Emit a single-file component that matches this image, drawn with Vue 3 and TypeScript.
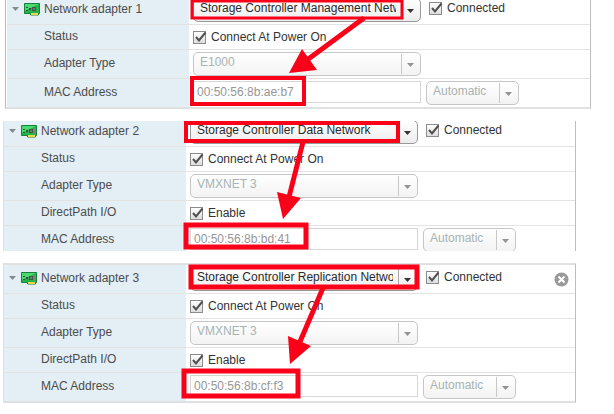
<script setup lang="ts">
import { ref } from 'vue'

interface Adapter {
  id: number
  network: string
  type: string
  directPath: boolean
  mac: string
  removable: boolean
}

const adapters = ref<Adapter[]>([
  { id: 1, network: 'Storage Controller Management Network', type: 'E1000', directPath: false, mac: '00:50:56:8b:ae:b7', removable: false },
  { id: 2, network: 'Storage Controller Data Network', type: 'VMXNET 3', directPath: true, mac: '00:50:56:8b:bd:41', removable: false },
  { id: 3, network: 'Storage Controller Replication Network', type: 'VMXNET 3', directPath: true, mac: '00:50:56:8b:cf:f3', removable: true },
])

const callouts = [
  { x: 192, y: 1, w: 210, h: 17, s: 3 },
  { x: 192, y: 78, w: 112, h: 26, s: 4 },
  { x: 186, y: 123, w: 212, h: 18, s: 4 },
  { x: 186, y: 225, w: 120, h: 22, s: 5 },
  { x: 191, y: 267, w: 226, h: 20, s: 5 },
  { x: 184, y: 371, w: 114, h: 25, s: 5 },
]

const arrows = [
  { line: 'M364 18 L307 60', head: '289,73 302,49 317,70' },
  { line: 'M303 142 L289 197', head: '283,219 277,192 301,198' },
  { line: 'M323 288 L299 344', head: '290,364 288,336 311,346' },
]
</script>

<template>
  <main class="page">
    <section v-for="a in adapters" :key="a.id" class="window" :class="'window-' + a.id">
      <div class="panel">
        <div class="row tall">
          <div class="name">
            <button class="toggle" type="button" :aria-label="'Collapse adapter ' + a.id">
              <svg width="7" height="4" viewBox="0 0 7 4"><path d="M0 0H7L3.5 4Z" fill="#848b8f" /></svg>
            </button>
            <svg class="card" width="16" height="13" viewBox="0 0 16 13" aria-hidden="true">
              <path d="M0.5 0.5H15.5V10.5H14.5V12H6.5V10.5H0.5Z" fill="#25b34b" stroke="#168238" />
              <path d="M1 1H15L1 8Z" fill="#4bd873" />
              <path d="M7 10H14V12H7Z" fill="#e5d84b" />
              <path d="M2 4H4V5H2ZM2 7H4V8H2ZM5 5H7V7H5Z" fill="#285438" />
              <path d="M8 4H12V8H8Z" fill="#45534b" />
              <path d="M9 5H11V7H9Z" fill="#6a7d71" />
              <path d="M13 3H14V9H13Z" fill="#6b8d70" />
            </svg>
            <label :for="'net' + a.id">Network adapter {{ a.id }}</label>
          </div>
          <div class="value">
            <span class="combo wide">
              <select :id="'net' + a.id"><option>{{ a.network }}</option></select>
              <svg class="drop" width="20" height="22" viewBox="0 0 20 22"><path d="M0.5 1V21" stroke="#a8a8a8" /><path d="M6 10H13L9.5 14Z" fill="#333" /></svg>
            </span>
            <label class="check connected">
              <span class="box"><input type="checkbox" checked /><svg width="15" height="13" viewBox="0 0 15 13"><path d="M3 6L6 9.5L12.5 1.5" /></svg></span>
              Connected
            </label>
            <button v-if="a.removable" class="remove" type="button" aria-label="Remove">
              <svg width="15" height="15" viewBox="0 0 15 15"><circle cx="7.5" cy="7.5" r="7" fill="#999" /><path d="M4.5 4.5L10.5 10.5M10.5 4.5L4.5 10.5" stroke="#fff" stroke-width="2" /></svg>
            </button>
          </div>
        </div>

        <div class="row">
          <label class="name" :for="'power' + a.id">Status</label>
          <div class="value">
            <label class="check">
              <span class="box"><input :id="'power' + a.id" type="checkbox" checked /><svg width="15" height="13" viewBox="0 0 15 13"><path d="M3 6L6 9.5L12.5 1.5" /></svg></span>
              Connect At Power On
            </label>
          </div>
        </div>

        <div class="row tall">
          <label class="name" :for="'type' + a.id">Adapter Type</label>
          <div class="value">
            <span class="combo wide">
              <select :id="'type' + a.id" disabled><option>{{ a.type }}</option></select>
              <svg class="drop" width="20" height="22" viewBox="0 0 20 22"><path d="M0.5 1V21" stroke="#c8c8c8" /><path d="M6 10H13L9.5 14Z" fill="#929292" /></svg>
            </span>
          </div>
        </div>

        <div v-if="a.directPath" class="row">
          <label class="name" :for="'direct' + a.id">DirectPath I/O</label>
          <div class="value">
            <label class="check">
              <span class="box"><input :id="'direct' + a.id" type="checkbox" checked /><svg width="15" height="13" viewBox="0 0 15 13"><path d="M3 6L6 9.5L12.5 1.5" /></svg></span>
              Enable
            </label>
          </div>
        </div>

        <div class="row tall">
          <label class="name" :for="'mac' + a.id">MAC Address</label>
          <div class="value">
            <input :id="'mac' + a.id" class="mac" type="text" :value="a.mac" disabled />
            <span class="combo short">
              <select aria-label="MAC assignment" disabled><option>Automatic</option></select>
              <svg class="drop" width="20" height="22" viewBox="0 0 20 22"><path d="M0.5 1V21" stroke="#c8c8c8" /><path d="M6 10H13L9.5 14Z" fill="#929292" /></svg>
            </span>
          </div>
        </div>
      </div>
    </section>

    <svg class="annotations" width="614" height="414" viewBox="0 0 614 414" aria-hidden="true">
      <rect v-for="(c, i) in callouts" :key="'c' + i" :x="c.x" :y="c.y" :width="c.w" :height="c.h" :stroke-width="c.s" fill="none" />
      <template v-for="(r, i) in arrows" :key="'a' + i">
        <path :d="r.line" stroke-width="5" />
        <polygon :points="r.head" stroke="none" />
      </template>
    </svg>
  </main>
</template>

<style>
body {
  margin: 0;
  background: #fff;
}
</style>

<style scoped>
.page {
  position: relative;
  display: flex;
  flex-direction: column;
  gap: 12px;
  font-family: "Liberation Sans", Arial, sans-serif;
  font-size: 12px;
  line-height: 14px;
  color: #333;
}
.window {
  overflow: hidden;
  margin: 0 38px 0 3px;
}
.window-1 {
  margin: 0 23px 0 5px;
}
.window-2 {
  height: 130px;
}
.panel {
  border: solid #e0e0e0;
  border-width: 2px 1px 2px 1px;
  border-right-color: #bdbdbd;
}
.window-1 .panel {
  margin-top: -4px;
  padding-left: 1px;
  border-top: 0;
  border-left-color: #b8b8b8;
}
.window-2 .panel {
  margin-top: -3px;
  border-top: 0;
}
.row {
  display: grid;
  grid-template-columns: 182px minmax(0, 1fr);
  height: 24px;
  border-bottom: 1px solid #e3e3e3;
}
.row.tall {
  height: 28px;
}
.row:last-child {
  border-bottom: 0;
}
.name {
  display: flex;
  align-items: center;
  padding: 0 0 3px 37px;
  background: #e3eef5;
  color: #4c4c4c;
}
div.name {
  padding-left: 5px;
}
.toggle,
.remove {
  display: flex;
  padding: 0;
  border: 0;
  background: none;
}
.card {
  margin: 2px 4px 0 5px;
}
.value {
  display: flex;
  align-items: center;
  padding-left: 4px;
  white-space: nowrap;
}
.combo {
  position: relative;
  flex: none;
  height: 24px;
}
.wide {
  width: 228px;
}
.short {
  width: 93px;
  margin-left: 5px;
}
select {
  appearance: none;
  box-sizing: border-box;
  width: 100%;
  height: 24px;
  margin: 0;
  padding: 0 24px 4px 6px;
  border: 1px solid #999;
  border-radius: 5px;
  background: linear-gradient(#fff, #ececec);
  color: #2b2b2b;
  font: inherit;
  display: block;
}
select:disabled {
  border-color: #c6c6c6;
  background: linear-gradient(#fff, #f3f3f3);
  color: #a8b3b2;
  opacity: 1;
}
.drop {
  position: absolute;
  top: 1px;
  right: 0;
  pointer-events: none;
}
.check {
  display: flex;
  align-items: center;
  gap: 5px;
}
.connected {
  margin: 0 0 4px 8px;
}
.box {
  display: grid;
  width: 13px;
  height: 13px;
}
.box > * {
  grid-area: 1 / 1;
}
.box input {
  appearance: none;
  box-sizing: border-box;
  width: 13px;
  height: 13px;
  margin: 0;
  border: 1px solid #8c8c8c;
  background: linear-gradient(#fff, #ddd);
}
.box svg {
  pointer-events: none;
  fill: none;
  stroke: #505050;
  stroke-width: 2;
}
.remove {
  margin: 0 6px 0 auto;
}
.mac {
  box-sizing: border-box;
  width: 228px;
  height: 22px;
  margin: 0 0 2px;
  padding: 0 3px;
  border: 1px solid #d6d6d6;
  background: #fff;
  color: #969696;
  font: inherit;
}
.annotations {
  position: absolute;
  top: 0;
  left: 0;
  pointer-events: none;
  stroke: #fb0019;
  fill: #fb0019;
}
</style>
